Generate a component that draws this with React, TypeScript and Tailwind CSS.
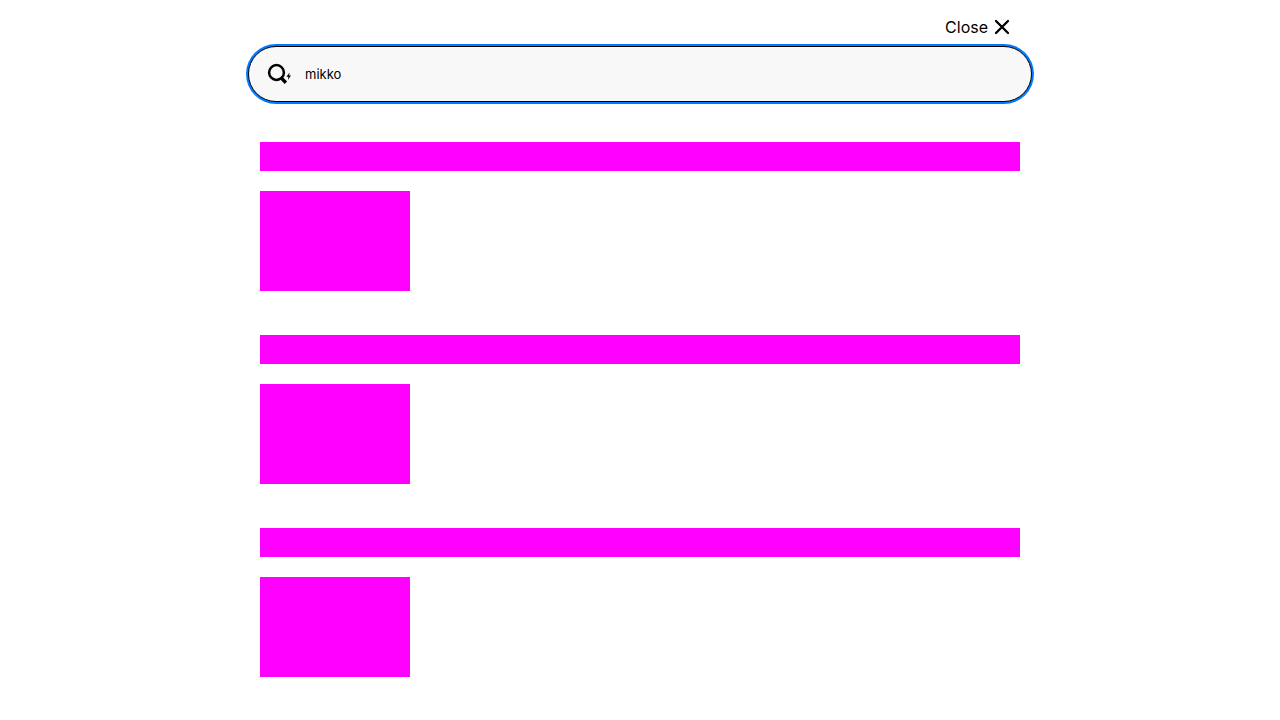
const sections = ["first", "second", "third"];

function SearchIcon() {
  return (
    <svg className="h-6 w-6 shrink-0" viewBox="0 0 24 24" fill="none" aria-hidden="true">
      <circle cx="9.5" cy="10.5" r="7.4" stroke="#000" strokeWidth="2.5" />
      <path d="M14 15.6 L18.9 20.7" stroke="#000" strokeWidth="3.4" />
      <path d="M22.6 10.4 L19.4 14.8 H21.4 L20.9 18 L24 13.5 H22.1 Z" fill="#000" />
    </svg>
  );
}

function CloseIcon() {
  return (
    <svg className="h-4 w-4" viewBox="0 0 16 16" fill="none" aria-hidden="true">
      <path d="M2 2 L14 14 M14 2 L2 14" stroke="#000" strokeWidth="2.3" strokeLinecap="round" />
    </svg>
  );
}

function LoadingSection() {
  return (
    <section className="flex flex-col gap-5">
      <div className="h-[29px] bg-[#ff00ff]" />
      <div className="h-[100px] w-[150px] bg-[#ff00ff]" />
    </section>
  );
}

export default function App() {
  return (
    <main className="bg-white font-['Inter',sans-serif] text-black">
      <div className="mx-auto max-w-[784px] pt-4">
        <div className="flex justify-end pr-[22px]">
          <button type="button" className="flex items-center gap-1.5 text-base leading-[22px]">
            Close
            <CloseIcon />
          </button>
        </div>
        <form role="search" className="mt-2" onSubmit={(event) => event.preventDefault()}>
          <label className="flex h-14 items-center gap-3.5 rounded-full border border-black bg-[#f8f8f8] px-[18px] ring-2 ring-[#007bff]">
            <SearchIcon />
            <input
              type="text"
              aria-label="Search"
              defaultValue="mikko"
              className="min-w-0 flex-1 bg-transparent text-[13px] leading-5 outline-none"
            />
          </label>
        </form>
        <div className="mt-10 flex flex-col gap-11 px-3 pb-11" aria-busy="true">
          {sections.map((id) => (
            <LoadingSection key={id} />
          ))}
        </div>
      </div>
    </main>
  );
}
